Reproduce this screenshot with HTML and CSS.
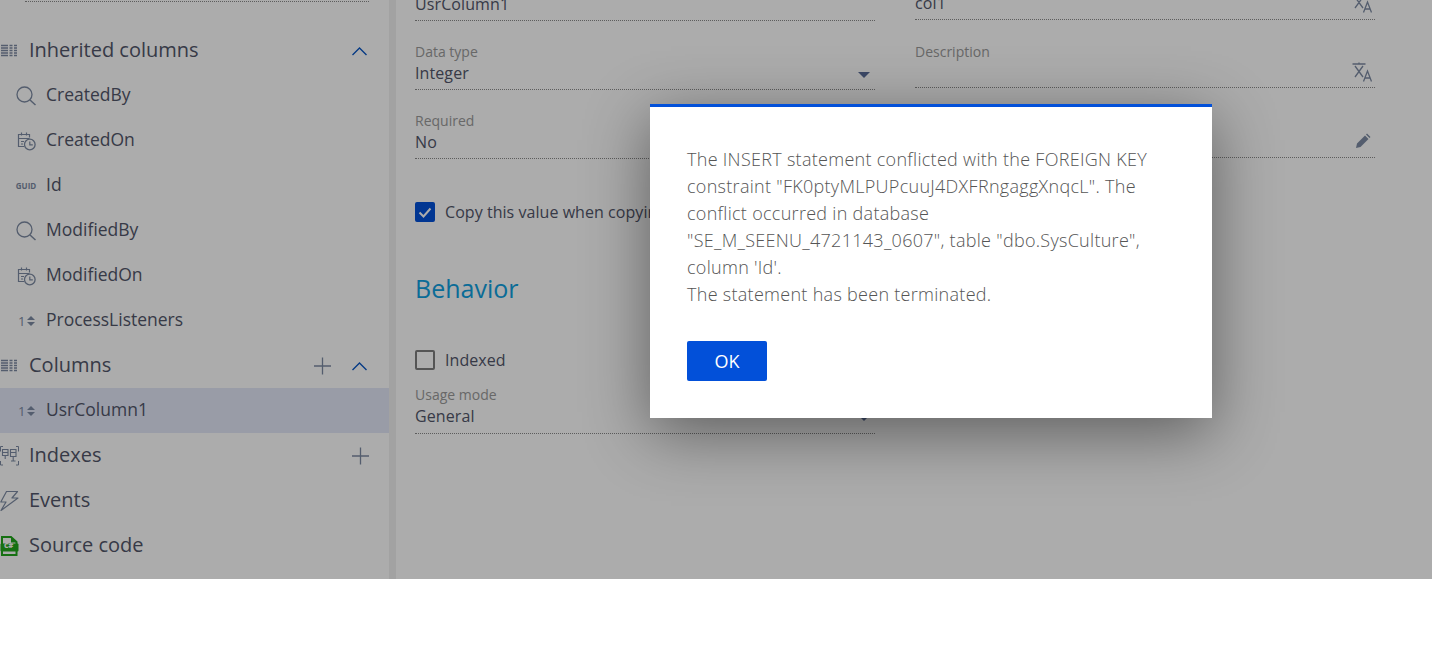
FILE: index.html
```html
<!DOCTYPE html>
<html lang="en">
<head>
<meta charset="utf-8">
<title>Column properties</title>
<link rel="stylesheet" href="styles.css">
</head>
<body>
<svg class="defs" width="0" height="0" aria-hidden="true">
  <symbol id="i-list" viewBox="0 0 19 20">
    <path d="M1 4.500h7M1 7h7M1 9.500h7M1 12h7M1 14.500h7M9.500 4.500h3M9.500 7h3M9.500 9.500h3M9.500 12h3M9.500 14.500h3M14 4.500h3M14 7h3M14 9.500h3M14 12h3M14 14.500h3" fill="none" stroke="currentColor" stroke-width="1.400"/>
  </symbol>
  <symbol id="i-search" viewBox="0 0 20 20">
    <circle cx="8.500" cy="8.500" r="7.500" fill="none" stroke="currentColor" stroke-width="1.300"/>
    <path d="M14 14l5.500 5" fill="none" stroke="currentColor" stroke-width="1.500"/>
  </symbol>
  <symbol id="i-date" viewBox="0 0 20 20">
    <path d="M8 15.500H2.500v-12h11v3M2.500 7.500h11M5.500 1.500v3M10.500 1.500v3M5 10.500h3M5 13h2" fill="none" stroke="currentColor" stroke-width="1.200"/>
    <circle cx="13.800" cy="13.500" r="5.300" fill="none" stroke="currentColor" stroke-width="1.300"/>
    <path d="M13.800 10.500v3.300h3" fill="none" stroke="currentColor" stroke-width="1.200"/>
  </symbol>
  <symbol id="i-tri" viewBox="0 0 20 20">
    <path d="M11 9l4-4 4 4zM11 11h8l-4 4z" fill="currentColor"/>
  </symbol>
  <symbol id="i-chev" viewBox="0 0 20 20">
    <path d="M1.500 14l7-7 7 7" fill="none" stroke="currentColor" stroke-width="1.400"/>
  </symbol>
  <symbol id="i-plus" viewBox="0 0 20 20">
    <path d="M9.500 1.500v17M1 10h17" fill="none" stroke="currentColor" stroke-width="1.300"/>
  </symbol>
  <symbol id="i-index" viewBox="0 0 19 20">
    <path d="M3 .5H.5v5M16 .5h2.500v5M.5 15v4h2.500M18.500 15v4H16" fill="none" stroke="currentColor" stroke-width="1"/>
    <path d="M2.500 3.500h5.500v6H2.500zM2.500 6.500h5.500M5.200 9.500v3.500M10.500 3.500h5.500v7h-5.500zM10.500 6.500h5.500M13.200 10.500v4M11 15h4.500" fill="none" stroke="currentColor" stroke-width="1.100"/>
  </symbol>
  <symbol id="i-bolt" viewBox="0 0 19 20">
    <path d="M6.500 .5h11l-5.500 6.500h6L1 19.500 6 11H.8z" fill="none" stroke="currentColor" stroke-width="1.200" stroke-linejoin="round"/>
  </symbol>
  <symbol id="i-trans" viewBox="0 0 20 20">
    <path d="M.5 2h13M7 .5V2M3 4l8 11M11 4L3 15" fill="none" stroke="currentColor" stroke-width="1.300"/>
    <path d="M11.500 19.500l4-10.500 4 10.500M13 16h5" fill="none" stroke="currentColor" stroke-width="1.300"/>
  </symbol>
  <symbol id="i-pencil" viewBox="0 0 16 16">
    <path d="M1 15l1-4.500 8-8 3.500 3.500-8 8zM11 1.500l1-1 3.500 3.500-1 1z" fill="currentColor"/>
  </symbol>
</svg>

<div class="app">
  <aside class="sidebar">
    <div class="sidebar-rule"></div>
    <div class="row head"><svg class="head-icon"><use href="#i-list"/></svg><span class="text">Inherited columns</span><span class="actions"><svg class="act act-blue"><use href="#i-chev"/></svg></span></div>
    <div class="row item"><svg class="item-icon"><use href="#i-search"/></svg><span class="text">CreatedBy</span></div>
    <div class="row item"><svg class="item-icon"><use href="#i-date"/></svg><span class="text">CreatedOn</span></div>
    <div class="row item"><span class="item-icon guid">GUID</span><span class="text">Id</span></div>
    <div class="row item"><svg class="item-icon"><use href="#i-search"/></svg><span class="text">ModifiedBy</span></div>
    <div class="row item"><svg class="item-icon"><use href="#i-date"/></svg><span class="text">ModifiedOn</span></div>
    <div class="row item"><span class="item-icon num"><span class="num-one">1</span><svg class="num-tri"><use href="#i-tri"/></svg></span><span class="text">ProcessListeners</span></div>
    <div class="row head"><svg class="head-icon"><use href="#i-list"/></svg><span class="text">Columns</span><span class="actions"><svg class="act"><use href="#i-plus"/></svg><svg class="act act-blue"><use href="#i-chev"/></svg></span></div>
    <div class="row item selected"><span class="item-icon num"><span class="num-one">1</span><svg class="num-tri"><use href="#i-tri"/></svg></span><span class="text">UsrColumn1</span></div>
    <div class="row head"><svg class="head-icon"><use href="#i-index"/></svg><span class="text">Indexes</span><span class="actions"><svg class="act"><use href="#i-plus"/></svg></span></div>
    <div class="row head"><svg class="head-icon"><use href="#i-bolt"/></svg><span class="text">Events</span></div>
    <div class="row head"><span class="head-icon cs"><svg class="cs-file" viewBox="0 0 19 20"><path d="M2 1h9l5.500 5v13H2z" fill="none" stroke="#22a61c" stroke-width="2"/><path d="M11 1v5.500h5.500z" fill="#22a61c"/><rect x="0.500" y="7.500" width="18" height="8" rx="1" fill="#22a61c"/></svg><span class="cs-text">C#</span></span><span class="text">Source code</span></div>
  </aside>
  <div class="splitter"></div>
  <main class="main">
    <div class="columns">
      <div class="col col-left">
        <div class="field first"><div class="label">Code</div><div class="input"><span>UsrColumn1</span></div></div>
        <div class="field"><div class="label">Data type</div><div class="input"><span>Integer</span><i class="arrow"></i></div></div>
        <div class="field"><div class="label">Required</div><div class="input"><span>No</span></div></div>
      </div>
      <div class="col col-right">
        <div class="field first"><div class="label">Title</div><div class="input"><span>col1</span><svg class="trans"><use href="#i-trans"/></svg></div></div>
        <div class="field field-short"><div class="label">Description</div><div class="input"><span></span><svg class="trans"><use href="#i-trans"/></svg></div></div>
        <div class="field field-tall"><div class="label"></div><div class="input"><span></span><svg class="pencil"><use href="#i-pencil"/></svg></div></div>
      </div>
    </div>
    <label class="check check-copy"><span class="box on"><svg viewBox="0 0 20 20"><path d="M4.500 10.500l4 4 7-8" fill="none" stroke="#fff" stroke-width="2"/></svg></span><span>Copy this value when copying</span></label>
    <h2 class="section">Behavior</h2>
    <label class="check check-indexed"><span class="box"></span><span>Indexed</span></label>
    <div class="usage-wrap">
      <div class="field usage"><div class="label">Usage mode</div><div class="input"><span>General</span><i class="arrow"></i></div></div>
    </div>
  </main>
  <div class="overlay"></div>
  <div class="dialog">
    <p class="message">The INSERT statement conflicted with the FOREIGN KEY constraint "FK0ptyMLPUPcuuJ4DXFRngaggXnqcL". The conflict occurred in database "SE_M_SEENU_4721143_0607", table "dbo.SysCulture", column 'Id'.<br>The statement has been terminated.</p>
    <button class="ok" type="button">OK</button>
  </div>
</div>
</body>
</html>
```
FILE: styles.css
```css
* { box-sizing: border-box; }
html, body { margin: 0; padding: 0; background: #fff; overflow: hidden; }
body { font-family: "Open Sans", "Noto Sans", sans-serif; color: #52566a; }
.defs { position: absolute; }

.app { position: relative; display: flex; height: 579px; overflow: hidden; background: #fff; }

.sidebar { width: 389px; flex: none; }
.sidebar-rule { height: 2px; margin: 0 20px 26px 25px; border-bottom: 1px dotted #8a8a8a; }
.row { display: flex; align-items: center; height: 45px; }
.head { font-size: 20px; gap: 10px; padding-right: 18px; }
.head .text { margin-bottom: 2px; }
.item { font-size: 17.5px; gap: 10px; padding-left: 16px; }
.item .text { margin-bottom: 3px; }
.selected { background: #e3e8f8; }
.head-icon { width: 19px; height: 20px; flex: none; color: #7d8ba3; }
.item-icon { width: 20px; height: 20px; flex: none; color: #7d8ba3; }
.guid { display: flex; align-items: center; justify-content: center; font-size: 8px; font-weight: 700; }
.num { display: flex; align-items: center; }
.num-one { width: 0; margin-left: 2px; font-size: 13px; line-height: 20px; overflow: visible; }
.num-tri { width: 20px; height: 20px; flex: none; margin-left: -2px; }
.cs { display: flex; align-items: center; justify-content: flex-start; }
.cs-file { width: 19px; height: 20px; flex: none; }
.cs-text { width: 0; margin-left: -15px; font-size: 7px; line-height: 10px; font-weight: 800; color: #fff; white-space: nowrap; }
.actions { margin-left: auto; display: flex; gap: 18px; }
.act { width: 20px; height: 20px; color: #7d8ba3; }
.act-blue { color: #0a58c4; }

.splitter { width: 7px; flex: none; background: #f1f1f1; }

.main { flex: 1; padding-left: 19px; min-width: 0; }
.columns { display: flex; gap: 40px; }
.col { width: 460px; flex: none; }
.col-left { margin-top: -48px; }
.col-right { margin-top: -49px; }
.usage-wrap { width: 460px; }

.field { padding-top: 21px; border-bottom: 1px dotted #8a8a8a; }
.label { height: 19px; font-size: 14px; line-height: 19px; color: #9a9a9a; }
.input { display: flex; align-items: center; justify-content: space-between; height: 24px; margin-bottom: 4px; font-size: 16px; line-height: 24px; letter-spacing: .1px; }
.field-short { padding-top: 22px; }
.field-short .input { margin-bottom: 2px; }
.field-tall { padding-top: 22px; }
.trans { width: 20px; height: 20px; margin: 0 3px 2px 0; color: #7d8ba3; }
.first .trans { margin-bottom: 0; }
.pencil { width: 16px; height: 16px; margin-right: 4px; color: #7d8ba3; }
.arrow { width: 0; height: 0; margin: 3px 5px 0 0; border-left: 6px solid transparent; border-right: 6px solid transparent; border-top: 6px solid #5a6d99; }

.check { display: flex; align-items: center; gap: 10px; height: 20px; font-size: 16px; letter-spacing: .05px; white-space: nowrap; }
.check-copy { margin-top: 43px; }
.box { width: 20px; height: 20px; flex: none; border: 2px solid #7d7d7d; border-radius: 2px; display: block; }
.box.on { background: #0250d9; border-color: #0250d9; }
.box svg { display: block; width: 20px; height: 20px; margin: -2px; }

.section { margin: 50px 0 46px; height: 32px; font-size: 25px; line-height: 32px; font-weight: 400; color: #10a0e0; }
.usage { padding-top: 15px; }
.usage .input { margin-bottom: 5px; }

.overlay { position: absolute; inset: 0; background: rgba(0, 0, 0, .325); }

.dialog { position: absolute; left: 650px; top: 104px; width: 562px; height: 314px; padding: 39px 37px 37px; background: #fff; border-top: 3px solid #0250d9; box-shadow: 0 15px 60px rgba(0, 0, 0, .45); }
.message { margin: 0 0 33px; font-size: 18px; line-height: 27px; font-weight: 300; letter-spacing: .29px; color: #555; }
.ok { display: block; width: 80px; height: 40px; padding: 0; border: 0; border-radius: 2px; background: #0250d9; color: #fff; font-family: inherit; font-size: 18px; }
```
